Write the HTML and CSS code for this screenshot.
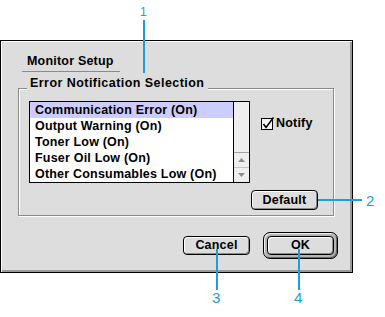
FILE: index.html
```html
<!DOCTYPE html>
<html lang="en">
<head>
    <meta charset="UTF-8">
    <title>Monitor Setup</title>
    <link rel="stylesheet" href="styles.css">
</head>
<body>
    <div class="page">
        <div class="dialog">
            <div class="tab-title">Monitor Setup</div>

            <div class="group">
                <div class="group-title">Error Notification Selection</div>
                <div class="group-body">
                    <div class="list">
                        <div class="rows">
                            <div class="row selected">Communication Error (On)</div>
                            <div class="row">Output Warning (On)</div>
                            <div class="row">Toner Low (On)</div>
                            <div class="row">Fuser Oil Low (On)</div>
                            <div class="row">Other Consumables Low (On)</div>
                        </div>
                        <div class="scrollbar">
                            <div class="track"></div>
                            <div class="arrow up">
                                <svg width="7" height="4" viewBox="0 0 7 4"><polygon points="0,4 7,4 3.5,0" fill="#8c8c8c"/></svg>
                            </div>
                            <div class="arrow down">
                                <svg width="7" height="4" viewBox="0 0 7 4"><polygon points="0,0 7,0 3.5,4" fill="#8c8c8c"/></svg>
                            </div>
                        </div>
                    </div>
                    <label class="check">
                        <svg class="box" width="14" height="13" viewBox="0 0 14 13">
                            <rect x="0.5" y="1.5" width="11" height="11" fill="#f4f4f4" stroke="#000"/>
                            <path d="M2.5 7 L5 10.5 L12.5 0.5" fill="none" stroke="#000" stroke-width="1.5"/>
                        </svg>
                        Notify
                    </label>
                </div>
                <div class="group-actions">
                    <button class="btn">Default</button>
                </div>
            </div>

            <div class="actions">
                <button class="btn btn-small">Cancel</button>
                <span class="ring"><button class="btn btn-small">OK</button></span>
            </div>
        </div>

        <!-- callouts -->
        <span class="num num-1">1</span>
        <span class="line line-1"></span>
        <span class="line line-2"></span>
        <span class="num num-2">2</span>
        <span class="line line-3"></span>
        <span class="num num-3">3</span>
        <span class="line line-4"></span>
        <span class="num num-4">4</span>
    </div>
</body>
</html>
```

FILE: styles.css
```css
body {
    margin: 0;
    background-color: white;
    font-family: "Liberation Sans", Arial, sans-serif;
}
.page {
    position: relative;
    width: 385px;
    height: 317px;
    overflow: hidden;
    background-color: white;
}
.dialog {
    margin-top: 40px;
    width: 353px;
    height: 233px;
    box-sizing: border-box;
    border: 1px solid #000;
    background-color: #dddddd;
    box-shadow: inset 1px 1px 0 #fff, inset -2px -2px 0 #9a9a9a;
    padding: 13px 14px 0 0;
    font-size: 12.5px;
    font-weight: bold;
    letter-spacing: 0.2px;
    color: #000;
}
.tab-title {
    width: 98px;
    box-sizing: border-box;
    margin-left: 21px;
    padding: 0 0 3px 5px;
    line-height: 14px;
    border-bottom: 1px solid #8a8a8a;
}
.group {
    margin: 16px 0 0 17px;
    width: 316px;
    box-sizing: border-box;
    border: 1px solid #8a8a8a;
    box-shadow: 1px 1px 0 #fff, inset 1px 1px 0 #fff;
    padding: 0 15px 5px 10px;
}
.group-title {
    width: max-content;
    margin: -13px 0 0 -2px;
    padding: 0 4px 0 3px;
    background-color: #dddddd;
    line-height: 14px;
    letter-spacing: 0.45px;
}
.group-body {
    display: flex;
    align-items: flex-start;
    gap: 11px;
    margin-top: 11px;
}
.list {
    display: flex;
    width: 221px;
    height: 82px;
    box-sizing: border-box;
    border: 1px solid #000;
    background-color: #fff;
}
.rows {
    flex: 1;
    overflow: hidden;
}
.row {
    height: 16px;
    line-height: 16px;
    padding-left: 5px;
    white-space: nowrap;
}
.row.selected {
    background-color: #ccccff;
}
.scrollbar {
    width: 15px;
    display: flex;
    flex-direction: column;
    border-left: 1px solid #000;
    background-color: #eeeeee;
}
.track {
    flex: 1;
    border-bottom: 1px solid #a0a0a0;
}
.arrow {
    height: 14px;
    display: flex;
    align-items: center;
    justify-content: center;
}
.arrow.up {
    border-bottom: 1px solid #c4c4c4;
}
.check {
    display: flex;
    align-items: center;
    gap: 1px;
    margin-top: 15px;
    line-height: 14px;
}
.box {
    display: block;
}
.group-actions {
    display: flex;
    justify-content: flex-end;
    margin-top: 7px;
}
.btn {
    width: 67px;
    height: 20px;
    box-sizing: border-box;
    padding: 0;
    border: 1px solid #000;
    border-radius: 4px;
    background-color: #dddddd;
    box-shadow: inset 1px 1px 0 #fff, inset -1px -1px 0 #8a8a8a;
    font: inherit;
    letter-spacing: inherit;
    color: #000;
    line-height: 16px;
}
.btn-small {
    height: 19px;
    line-height: 15px;
}
.actions {
    display: flex;
    justify-content: flex-end;
    align-items: center;
    gap: 13px;
    margin-top: 16px;
}
.ring {
    width: 75px;
    height: 27px;
    box-sizing: border-box;
    display: flex;
    align-items: center;
    justify-content: center;
    border: 1px solid #000;
    border-radius: 7px;
    background-color: #b4b4b4;
    box-shadow: inset 1px 1px 0 #eee, inset -1px -1px 0 #666;
}

/* callouts */
.line {
    position: absolute;
    background-color: #1a9fdc;
}
.line-1 { left: 143px; top: 20px; width: 2px; height: 53px; }
.line-2 { left: 318px; top: 199px; width: 44px; height: 2px; }
.line-3 { left: 216px; top: 249px; width: 2px; height: 41px; }
.line-4 { left: 298px; top: 249px; width: 2px; height: 41px; }
.num {
    position: absolute;
    font-family: "Liberation Sans", Arial, sans-serif;
    font-size: 15px;
    line-height: 15px;
    color: #1a9fdc;
}
.num-1 { left: 140px; top: 6px; font-size: 12px; line-height: 12px; }
.num-2 { left: 366px; top: 193px; }
.num-3 { left: 212px; top: 290px; }
.num-4 { left: 294px; top: 290px; }
```
